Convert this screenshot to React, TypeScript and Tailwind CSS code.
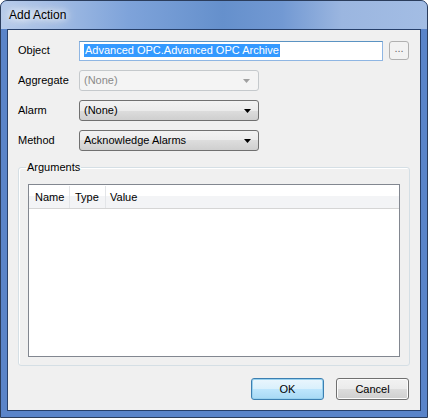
import React from "react";

const font = "font-['Liberation_Sans',Arial,sans-serif]";

function Arrow({ disabled }: { disabled?: boolean }) {
  return (
    <svg width="7" height="4" viewBox="0 0 7 4" className="shrink-0">
      <path d="M0 0h7L3.5 4z" fill={disabled ? "#a0a0a0" : "#000"} />
    </svg>
  );
}

function Combo({ value, disabled }: { value: string; disabled?: boolean }) {
  if (disabled) {
    return (
      <div className="flex h-[21px] w-[180px] items-center justify-between rounded-[3px] border border-[#c5c9cc] bg-[#f4f4f4] pl-[4px] pr-[8px] text-[#8a8a8a]">
        <span>{value}</span>
        <Arrow disabled />
      </div>
    );
  }
  return (
    <div className="flex h-[21px] w-[180px] items-center justify-between rounded-[3px] border border-[#707070] bg-[linear-gradient(#f2f2f2_0%,#ebebeb_50%,#dddddd_50%,#cfcfcf_100%)] pl-[4px] pr-[7px] text-black">
      <span>{value}</span>
      <Arrow />
    </div>
  );
}

function Row({ label, children, className = "" }: { label: string; children: React.ReactNode; className?: string }) {
  return (
    <div className={`flex items-center ${className}`}>
      <div className="w-[61px] text-black">{label}</div>
      {children}
    </div>
  );
}

export default function App() {
  return (
    <div className={`${font} text-[11px] leading-[13px] w-[428px] h-[418px] flex flex-col rounded-t-[7px] border border-[#2b3d5c] bg-[#5a84c9] px-[6px] pb-[6px] overflow-hidden`}>
      {/* title bar */}
      <div className="-mx-[6px] flex h-[28px] shrink-0 items-center bg-[linear-gradient(90deg,#b7cbea_0%,#a3bde4_12%,#7ea3da_30%,#6590cc_52%,#7299d3_66%,#9bb6e0_80%,#a3bde4_100%)] px-[8px]">
        <span className="text-[12px] text-black [text-shadow:0_0_6px_#fff,0_0_10px_#fff,0_0_14px_#fff]">Add Action</span>
      </div>

      {/* client area */}
      <div className="flex flex-1 flex-col border border-[#27406b] bg-[#f0f0f0] px-[10px]">
        <Row label="Object" className="mt-[10px] h-[21px]">
          <div className="flex h-[20px] w-[304px] items-center border border-[#8fb6e3] border-t-[#5b93c2] bg-white pl-[4px]">
            <span className="bg-[#3399ff] px-[1px] text-white">Advanced OPC.Advanced OPC Archive</span>
          </div>
          <div className="ml-[6px] flex h-[19px] w-[20px] items-center justify-center rounded-[3px] border border-[#b0b0b0] bg-[#f2f2f2] pb-[4px] text-[#6b6b6b]">
            ...
          </div>
        </Row>
        <Row label="Aggregate" className="mt-[9px] h-[21px]">
          <Combo value="(None)" disabled />
        </Row>
        <Row label="Alarm" className="mt-[9px] h-[21px]">
          <Combo value="(None)" />
        </Row>
        <Row label="Method" className="mt-[9px] h-[21px]">
          <Combo value="Acknowledge Alarms" />
        </Row>

        <fieldset className="mt-[10px] rounded-[3px] border border-[#d5dfe5] px-[9px] pb-[8px] shadow-[inset_1px_1px_0_#fff]">
          <legend className="-ml-[2px] px-[1px] leading-[13px] text-black">Arguments</legend>
          <div className="mt-[10px] h-[173px] border border-[#828790] bg-white">
            <div className="flex h-[24px] items-center border-b border-[#d5d5d5] bg-[linear-gradient(#ffffff_0%,#ffffff_50%,#f3f4f6_50%,#f3f4f6_100%)] pt-[1px] text-black">
              <div className="flex h-full w-[41px] items-center border-r border-[#e3e5e8] pl-[6px]">Name</div>
              <div className="flex h-full w-[36px] items-center border-r border-[#e3e5e8] pl-[5px]">Type</div>
              <div className="flex h-full items-center pl-[4px]">Value</div>
            </div>
          </div>
        </fieldset>

        <div className="mt-[12px] flex justify-end gap-[12px] pr-[1px]">
          <div className="flex h-[22px] w-[73px] items-center justify-center rounded-[3px] border border-[#3c7fb1] bg-[linear-gradient(#eaf6fd_0%,#d9f0fc_50%,#bee6fd_50%,#a7d9f5_100%)] shadow-[inset_0_0_0_1px_#98d1ef] text-black">
            OK
          </div>
          <div className="flex h-[22px] w-[73px] items-center justify-center rounded-[3px] border border-[#707070] bg-[linear-gradient(#f2f2f2_0%,#ebebeb_50%,#dddddd_50%,#cfcfcf_100%)] shadow-[inset_0_0_0_1px_#fcfcfc] text-black">
            Cancel
          </div>
        </div>
      </div>
    </div>
  );
}
